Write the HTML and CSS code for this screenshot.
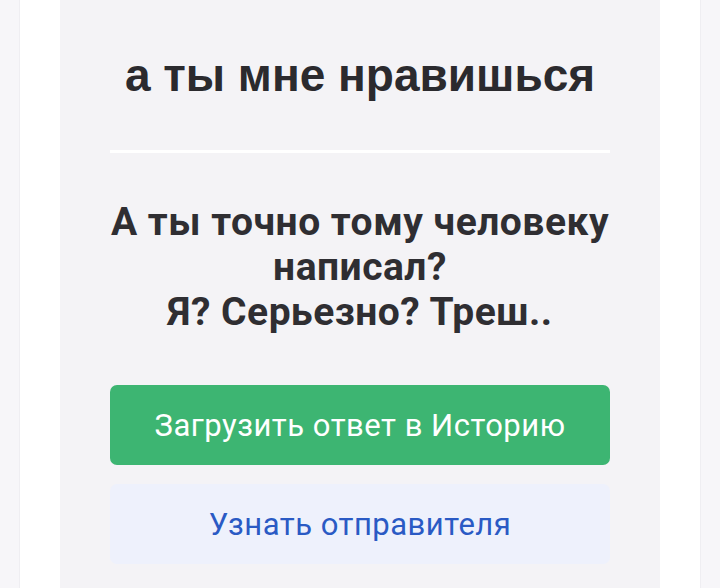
FILE: index.html
```html
<!DOCTYPE html>
<html lang="ru">
<head>
<meta charset="utf-8">
<title>Вопрос</title>
<link rel="stylesheet" href="styles.css">
</head>
<body>
<div class="page">
  <div class="card">
    <h1 class="title">а ты мне нравишься</h1>
    <hr class="divider">
    <p class="answer">А ты точно тому человеку написал?<br>Я? Серьезно? Треш..</p>
    <div class="actions">
      <button class="btn btn-story">Загрузить ответ в Историю</button>
      <button class="btn btn-sender">Узнать отправителя</button>
    </div>
  </div>
</div>
</body>
</html>
```
FILE: styles.css
```css
html, body {
  margin: 0;
  height: 100%;
}

body {
  background: #f7f6f9;
  overflow: hidden;
}

.page {
  box-sizing: border-box;
  height: 100%;
  margin: 0 19px;
  padding: 0 40px;
  background: #ffffff;
  border-left: 1px solid #efeef2;
  border-right: 1px solid #efeef2;
}

.card {
  box-sizing: border-box;
  height: 100%;
  padding: 47px 50px 0;
  background: #f4f3f6;
}

.title {
  margin: 0;
  font-family: "Liberation Sans", Arial, sans-serif;
  font-weight: 700;
  font-size: 46px;
  line-height: 56px;
  color: #2b2a2e;
  text-align: center;
}

.divider {
  margin: 47px 0 0;
  height: 3px;
  border: 0;
  background: #ffffff;
}

.answer {
  margin: 47px -10px 0;
  font-family: Roboto, "Liberation Sans", sans-serif;
  font-weight: 700;
  font-size: 39px;
  line-height: 45px;
  letter-spacing: 0.5px;
  color: #2f2e32;
  text-align: center;
}

.actions {
  display: flex;
  flex-direction: column;
  gap: 19px;
  margin-top: 50px;
}

.btn {
  display: flex;
  align-items: center;
  justify-content: center;
  height: 80px;
  border: 0;
  border-radius: 7px;
  font-family: Roboto, "Liberation Sans", sans-serif;
  font-size: 31px;
  font-weight: 400;
  letter-spacing: 0.5px;
}

.btn-story {
  background: #3db572;
  color: #ffffff;
}

.btn-sender {
  background: #eef1fc;
  color: #2a5ac4;
}
```
